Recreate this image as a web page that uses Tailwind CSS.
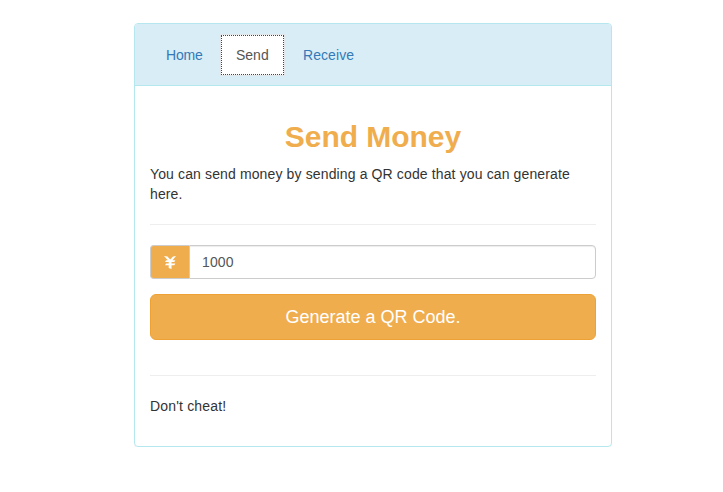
<!DOCTYPE html>
<html lang="en">
<head>
<meta charset="utf-8">
<title>Send Money</title>
<script src="https://cdn.jsdelivr.net/npm/@tailwindcss/browser@4"></script>
</head>
<body class="bg-white font-['Liberation_Sans',Arial,sans-serif] text-sm leading-5 text-[#333]">
<main class="ml-[134px] mt-[23px] h-[424px] w-[478px] rounded border border-[#b5e7ef] shadow-[0_1px_1px_rgba(0,0,0,0.05)]">
  <nav class="flex h-[62px] rounded-t-[3px] border-b border-[#b5e7ef] bg-[#d9edf7] px-[15px] pt-[11px] text-[#337ab7]">
    <a class="block h-10 w-[68px] px-4 py-[10px] tracking-[-0.2px]">Home</a>
    <a class="ml-[3px] block h-10 w-[63px] border border-dotted border-[#444] bg-white px-[14px] py-[9px] text-[#555] shadow-[0_0_0_1px_#e2e6e9]">Send</a>
    <a class="ml-[3px] block h-10 px-4 py-[10px] tracking-[0.07px]">Receive</a>
  </nav>
  <section class="px-[15px] pt-[34px]">
    <h1 class="text-center text-[30px] font-bold leading-[33px] tracking-[-0.04px] text-[#f0ad4e]">Send Money</h1>
    <p class="mt-[11px] tracking-[0.13px]">You can send money by sending a QR code that you can generate here.</p>
    <hr class="mt-5 border-[#eee]">
    <div class="mt-5 flex h-[34px]">
      <span class="flex w-[39px] items-center justify-center rounded-l border border-r-0 border-[#ccc] bg-[#f0ad4e] text-white">
        <svg class="h-[14px] w-[14px]" viewBox="0 0 14 14" fill="currentColor"><path d="M1 1L4.500 1.500L7.200 4.500L10 1.500L13 1L9.500 5.200H12.300L11.300 7H8.500V8.500H12.300L11.300 10.300H8.500V14L5.700 13V10.300H2L3.200 8.500H5.700V7H2L3.200 5.200H4.800Z"/></svg>
      </span>
      <input aria-label="Amount" value="1000" class="min-w-0 flex-1 rounded-r border border-[#ccc] px-3 text-[#555] tracking-[0.1px] shadow-[inset_0_1px_1px_rgba(0,0,0,0.075)]">
    </div>
    <button class="mt-[15px] block h-[46px] w-full rounded-md border border-[#eea236] bg-[#f0ad4e] text-lg text-white">Generate a QR Code.</button>
    <hr class="mt-[35px] border-[#eee]">
    <p class="mt-5 tracking-[0.17px]">Don't cheat!</p>
  </section>
</main>
</body>
</html>
